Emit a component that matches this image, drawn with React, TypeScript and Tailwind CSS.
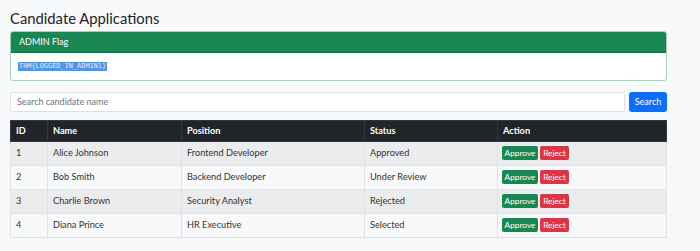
import React from "react";

const rows = [
  { id: 1, name: "Alice Johnson", position: "Frontend Developer", status: "Approved" },
  { id: 2, name: "Bob Smith", position: "Backend Developer", status: "Under Review" },
  { id: 3, name: "Charlie Brown", position: "Security Analyst", status: "Rejected" },
  { id: 4, name: "Diana Prince", position: "HR Executive", status: "Selected" },
];

export default function App() {
  return (
    <div
      className="w-[700px] h-[251px] bg-[#f8f9fa] text-[#212529] overflow-hidden"
      style={{ fontFamily: 'Lato, "Noto Sans", sans-serif' }}
    >
      <div className="w-[657px] ml-[10px] pt-[9px]">
        <h3 className="text-[14.8px] leading-[18px] font-normal m-0">Candidate Applications</h3>
        <div className="mt-[4px] rounded-[3px] border border-[#a3cfbb] overflow-hidden bg-white">
          <div className="h-[21px] bg-[#198754] border-b border-[#157347] text-white text-[9px] flex items-center pl-[8px]">
            ADMIN Flag
          </div>
          <div className="h-[27px] flex items-center pl-[7px]">
            <span
              className="bg-[#5594e4] text-[#e4ecf8] text-[6.9px] leading-[9px] px-[1px]"
              style={{ fontFamily: '"DejaVu Sans Mono", "Liberation Mono", monospace' }}
            >
              THM{"{"}LOGGED_IN_ADM1N1{"}"}
            </span>
          </div>
        </div>
        <div className="mt-[11px] flex gap-[4px] h-[20px]">
          <div className="flex-1 bg-white border border-[#dee2e6] rounded-[3px] flex items-center pl-[6px] text-[9px] text-[#6c757d]">
            Search candidate name
          </div>
          <button className="w-[38px] bg-[#0d6efd] rounded-[3px] text-white text-[9px]">Search</button>
        </div>
        <table className="mt-[8px] w-full border-collapse text-[9.2px]">
          <thead>
            <tr className="bg-[#212529] text-white font-bold h-[21px]">
              <th className="w-[37px] text-left font-bold pl-[5px] border border-[#32383e]">ID</th>
              <th className="w-[134px] text-left font-bold pl-[5px] border border-[#32383e]">Name</th>
              <th className="w-[183px] text-left font-bold pl-[5px] border border-[#32383e]">Position</th>
              <th className="w-[133px] text-left font-bold pl-[5px] border border-[#32383e]">Status</th>
              <th className="text-left font-bold pl-[5px] border border-[#32383e]">Action</th>
            </tr>
          </thead>
          <tbody>
            {rows.map((r, i) => (
              <tr key={r.id} className={i % 2 === 0 ? "bg-[#ebeced] h-[24px]" : "bg-[#f8f9fa] h-[24px]"}>
                <td className="pl-[5px] border border-[#dee2e6] align-top pt-[4px] text-[#333]">{r.id}</td>
                <td className="pl-[5px] border border-[#dee2e6] align-top pt-[4px] text-[#333]">{r.name}</td>
                <td className="pl-[5px] border border-[#dee2e6] align-top pt-[4px] text-[#333]">{r.position}</td>
                <td className="pl-[5px] border border-[#dee2e6] align-top pt-[4px] text-[#333]">{r.status}</td>
                <td className="pl-[4px] border border-[#dee2e6] align-top pt-[4px] pb-[4px]">
                  <div className="flex gap-[2px]">
                    <button className="w-[36px] h-[14px] bg-[#198754] text-white text-[8.3px] rounded-[2px] leading-none">
                      Approve
                    </button>
                    <button className="w-[29px] h-[14px] bg-[#dc3545] text-white text-[8.3px] rounded-[2px] leading-none">
                      Reject
                    </button>
                  </div>
                </td>
              </tr>
            ))}
          </tbody>
        </table>
      </div>
    </div>
  );
}
